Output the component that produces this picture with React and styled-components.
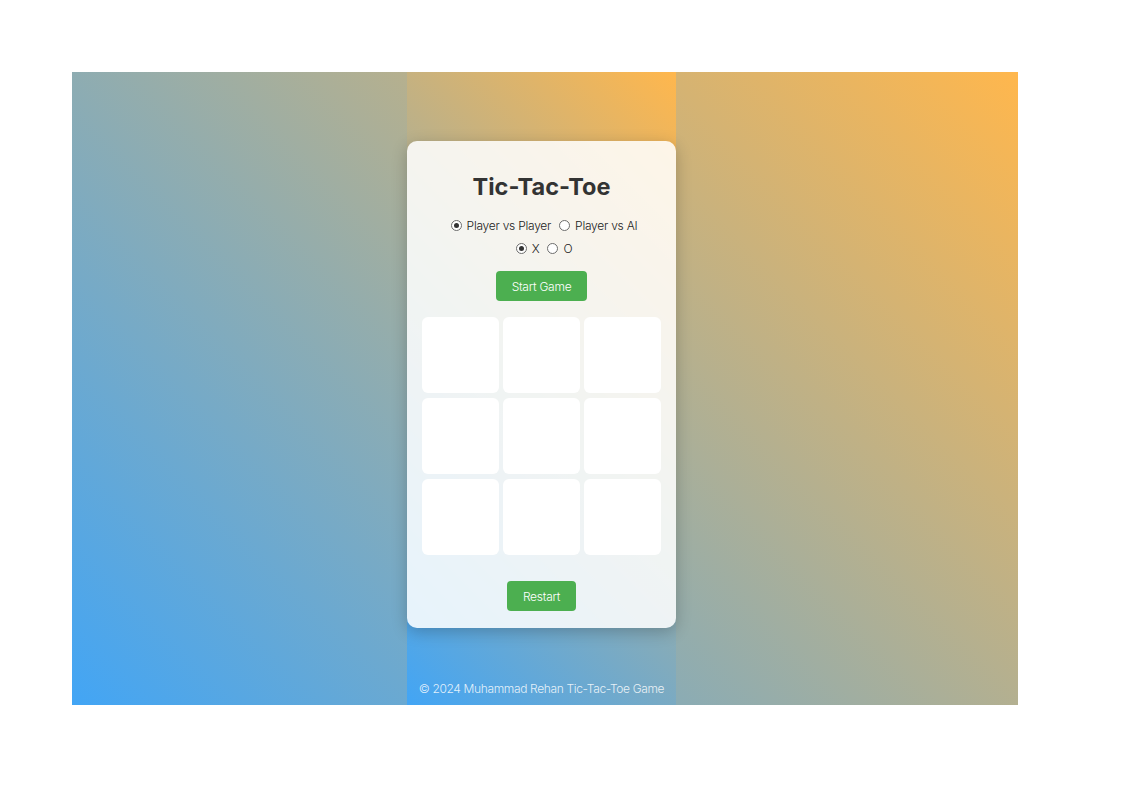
import React, { useState } from 'react';
import styled, { createGlobalStyle } from 'styled-components';

const GlobalStyle = createGlobalStyle`
  html, body {
    margin: 0;
    padding: 0;
    background: #ffffff;
  }
  body {
    font-family: Inter, "Liberation Sans", Arial, sans-serif;
  }
`

const Page = styled.div`
  padding: 72px 0 0 72px;
`

const Backdrop = styled.div`
  width: 946px;
  height: 633px;
  background: linear-gradient(45deg, #42a5f5, #ffb74d);
  display: flex;
  padding: 0 342px 0 335px;
  box-sizing: border-box;
`

const Column = styled.div`
  width: 269px;
  height: 100%;
  background: linear-gradient(45deg, #42a5f5, #ffb74d);
  display: flex;
  flex-direction: column;
  align-items: center;
  padding-top: 69px;
  box-sizing: border-box;
`

const Card = styled.div`
  width: 100%;
  background: rgba(255, 255, 255, 0.86);
  border-radius: 10px;
  box-shadow: 0 4px 16px rgba(0, 0, 0, 0.22);
  padding: 30px 15px 17px;
  box-sizing: border-box;
  display: flex;
  flex-direction: column;
  align-items: center;
`

const Title = styled.h1`
  margin: 0 0 13px;
  font-size: 23.5px;
  line-height: 32px;
  font-weight: 700;
  color: #333333;
`

const OptionRow = styled.div`
  display: flex;
  align-items: center;
  justify-content: center;
  gap: 8px;
  padding-left: 5px;
  font-size: 12px;
  letter-spacing: -0.25px;
  font-weight: 300;
  color: #222222;
  height: 18px;
  margin-bottom: ${props => props.$gap}px;
`

const Option = styled.label`
  display: flex;
  align-items: center;
  gap: 5px;
  cursor: pointer;
`

const Dot = styled.span`
  width: 9px;
  height: 9px;
  border-radius: 50%;
  border: 1px solid #6d6d6d;
  background: #ffffff;
  display: flex;
  align-items: center;
  justify-content: center;
  &::after {
    content: '';
    width: 5px;
    height: 5px;
    border-radius: 50%;
    background: ${props => (props.$on ? '#333333' : 'transparent')};
  }
`

const Button = styled.button`
  background: #4caf50;
  color: #ffffff;
  border: none;
  border-radius: 4px;
  font-family: inherit;
  font-size: 12px;
  letter-spacing: -0.25px;
  font-weight: 300;
  height: 30px;
  padding: 0 ${props => props.$pad}px;
  cursor: pointer;
`

const Board = styled.div`
  width: 100%;
  display: grid;
  grid-template-columns: repeat(3, 1fr);
  gap: 5px 4px;
  margin: 16px 0 26px;
`

const Cell = styled.div`
  height: 76px;
  background: #ffffff;
  border-radius: 6px;
`

const Footer = styled.div`
  margin-top: auto;
  line-height: 16px;
  padding-bottom: 8px;
  font-size: 12px;
  letter-spacing: -0.35px;
  font-weight: 300;
  color: rgba(255, 255, 255, 0.85);
  white-space: nowrap;
`

function Radio({ on, label, onPick }) {
  return (
    <Option onClick={onPick}>
      <Dot $on={on} />
      {label}
    </Option>
  )
}

export default function App() {
  const [mode, setMode] = useState('pvp');
  const [mark, setMark] = useState('X');
  return (
    <Page>
      <GlobalStyle />
      <Backdrop>
        <Column>
          <Card>
            <Title>Tic-Tac-Toe</Title>
            <OptionRow $gap={5}>
              <Radio on={mode === 'pvp'} label="Player vs Player" onPick={() => setMode('pvp')} />
              <Radio on={mode === 'ai'} label="Player vs AI" onPick={() => setMode('ai')} />
            </OptionRow>
            <OptionRow $gap={14}>
              <Radio on={mark === 'X'} label="X" onPick={() => setMark('X')} />
              <Radio on={mark === 'O'} label="O" onPick={() => setMark('O')} />
            </OptionRow>
            <Button $pad={16}>Start Game</Button>
            <Board>
              {Array.from({ length: 9 }).map((_, i) => <Cell key={i} />)}
            </Board>
            <Button $pad={16}>Restart</Button>
          </Card>
          <Footer>© 2024 Muhammad Rehan Tic-Tac-Toe Game</Footer>
        </Column>
      </Backdrop>
    </Page>
  );
}
